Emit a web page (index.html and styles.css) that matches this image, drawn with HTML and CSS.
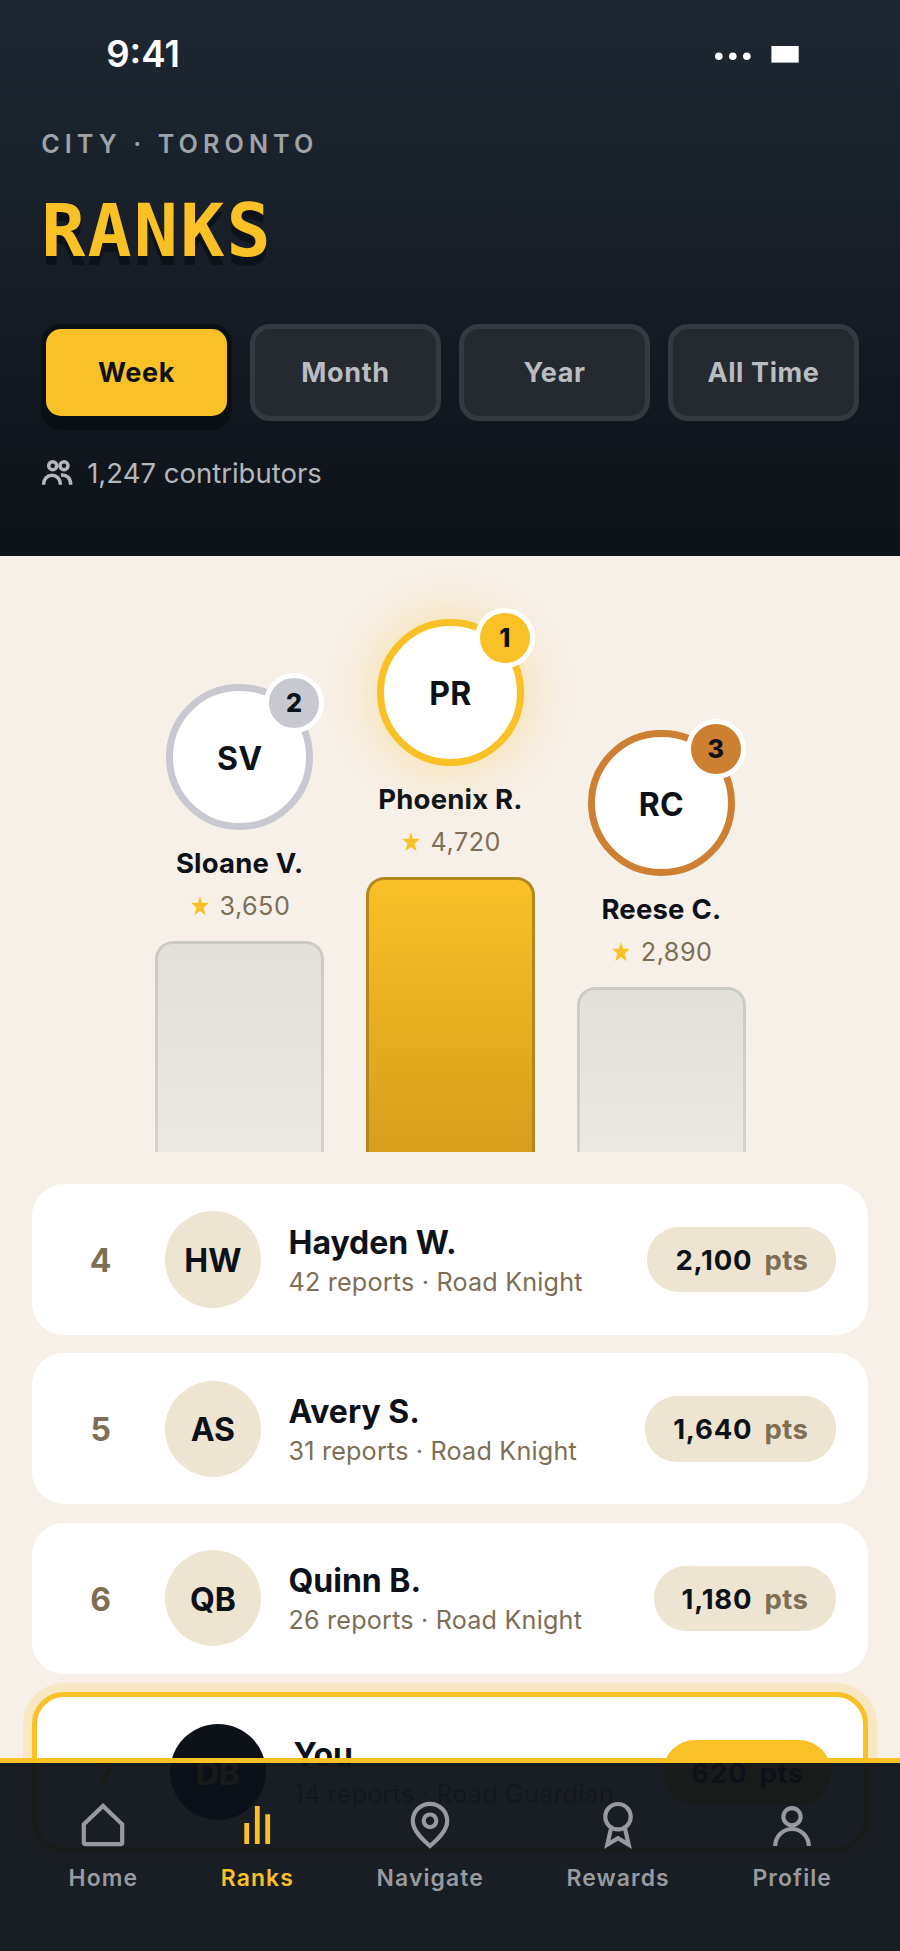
FILE: index.html
```html
<!DOCTYPE html>
<html lang="en">
<head>
<meta charset="utf-8">
<title>Ranks</title>
<link rel="stylesheet" href="styles.css">
</head>
<body>
<div class="screen">
  <header class="header">
    <div class="status">
      <span class="time">9:41</span>
      <svg class="status-icons" width="84" height="20" viewBox="0 0 84 20">
        <circle cx="3.8" cy="12.3" r="3.8"/><circle cx="17.8" cy="12.3" r="3.8"/><circle cx="31.8" cy="12.3" r="3.8"/>
        <rect x="56.4" y="2" width="27.3" height="16.6"/>
      </svg>
    </div>
    <div class="eyebrow">CITY · TORONTO</div>
    <h1 class="title">RANKS</h1>
    <div class="tabs">
      <button class="tab active">Week</button>
      <button class="tab">Month</button>
      <button class="tab">Year</button>
      <button class="tab">All Time</button>
    </div>
    <div class="contributors">
      <svg class="people" width="32" height="32" viewBox="0 0 32 32">
        <circle cx="11.7" cy="8.7" r="4"/><circle cx="23" cy="8.7" r="4"/>
        <path d="M2.7 27.7V26.7a8.3 8.4 0 0 1 16.6 0V27.7"/>
        <path d="M20 18C26 17.5 29.7 21.5 29.7 27.7"/>
      </svg>
      <span>1,247 contributors</span>
    </div>
  </header>

  <section class="podium">
    <div class="place silver">
      <div class="medal">SV<span class="badge">2</span></div>
      <div class="place-name">Sloane V.</div>
      <div class="place-points"><svg class="star" width="18" height="20" viewBox="0 0 18 20"><path d="M9 0l2 6.7h7l-5.4 4.8 2.1 7.8L9 15l-5.7 4.3 2.1-7.8L0 6.7h7z"/></svg>3,650</div>
      <div class="bar"></div>
    </div>
    <div class="place gold">
      <div class="medal">PR<span class="badge">1</span></div>
      <div class="place-name">Phoenix R.</div>
      <div class="place-points"><svg class="star" width="18" height="20" viewBox="0 0 18 20"><path d="M9 0l2 6.7h7l-5.4 4.8 2.1 7.8L9 15l-5.7 4.3 2.1-7.8L0 6.7h7z"/></svg>4,720</div>
      <div class="bar"></div>
    </div>
    <div class="place bronze">
      <div class="medal">RC<span class="badge">3</span></div>
      <div class="place-name">Reese C.</div>
      <div class="place-points"><svg class="star" width="18" height="20" viewBox="0 0 18 20"><path d="M9 0l2 6.7h7l-5.4 4.8 2.1 7.8L9 15l-5.7 4.3 2.1-7.8L0 6.7h7z"/></svg>2,890</div>
      <div class="bar"></div>
    </div>
  </section>

  <section class="list">
    <div class="row">
      <div class="rank">4</div><div class="avatar">HW</div>
      <div class="who"><div class="name">Hayden W.</div><div class="sub">42 reports · Road Knight</div></div>
      <div class="pill">2,100<span class="unit">pts</span></div>
    </div>
    <div class="row">
      <div class="rank">5</div><div class="avatar">AS</div>
      <div class="who"><div class="name">Avery S.</div><div class="sub">31 reports · Road Knight</div></div>
      <div class="pill">1,640<span class="unit">pts</span></div>
    </div>
    <div class="row">
      <div class="rank">6</div><div class="avatar">QB</div>
      <div class="who"><div class="name">Quinn B.</div><div class="sub">26 reports · Road Knight</div></div>
      <div class="pill">1,180<span class="unit">pts</span></div>
    </div>
    <div class="row me">
      <div class="rank">7</div><div class="avatar">DB</div>
      <div class="who"><div class="name">You</div><div class="sub">14 reports · Road Guardian</div></div>
      <div class="pill">620<span class="unit">pts</span></div>
    </div>
  </section>

  <nav class="nav">
    <a class="item">
      <svg class="icon" width="48" height="48" viewBox="0 0 48 48"><path d="M4.8 24.3L24 6l19.2 18.3v18.2q0 1.7-1.7 1.7h-35q-1.7 0-1.7-1.7z"/></svg>
      <span>Home</span>
    </a>
    <a class="item current">
      <svg class="icon bars" width="48" height="48" viewBox="0 0 48 48"><path d="M13.7 44V23M24.3 44V6M34.7 44V14.3"/></svg>
      <span>Ranks</span>
    </a>
    <a class="item">
      <svg class="icon" width="48" height="48" viewBox="0 0 48 48"><path d="M24 46C17 40 6.8 31 6.8 21a17.2 17.2 0 0 1 34.4 0C41.2 31 31 40 24 46z"/><circle cx="24" cy="20.8" r="6.3"/></svg>
      <span>Navigate</span>
    </a>
    <a class="item">
      <svg class="icon" width="48" height="48" viewBox="0 0 48 48"><circle cx="24" cy="16.7" r="12.7"/><path d="M17 28.5L13.3 44.6 24 38.3l10.7 6.3L31 28.5"/></svg>
      <span>Rewards</span>
    </a>
    <a class="item">
      <svg class="icon" width="48" height="48" viewBox="0 0 48 48"><circle cx="24" cy="16.7" r="8.6"/><path d="M7.2 46a16.8 17 0 0 1 33.6 0"/></svg>
      <span>Profile</span>
    </a>
  </nav>
</div>
</body>
</html>
```

FILE: styles.css
```css
* { box-sizing: border-box; }
body { margin: 0; font-family: Inter, "Liberation Sans", sans-serif; color: #0d1218; }

.screen { position: relative; width: 900px; height: 1951px; overflow: hidden; background: #f7f0e9; }

.header { height: 556px; padding: 32px 41.2px 0; background: linear-gradient(180deg, #1e2832, #0e1219); }
.status { display: flex; justify-content: space-between; height: 97px; padding: 0 60px 0 65px; color: #fff; }
.time { font-size: 36.6px; font-weight: 600; line-height: 45px; }
.status-icons { margin-top: 12px; fill: #fff; }
.eyebrow { font-size: 25.2px; font-weight: 600; line-height: 30px; letter-spacing: 5.05px; color: #9fa3a8; }
.title { margin: 34.5px 0 56.5px; font-family: "DejaVu Sans Mono", monospace; font-size: 73.3px; font-weight: 700; line-height: 74px; letter-spacing: 2.2px; color: #f9c126; text-shadow: 0 9px 0 #0d1218; }

.tabs { display: grid; grid-template-columns: repeat(4, 1fr); gap: 18.3px; }
.tab { height: 97.4px; padding: 0; border: 5px solid #343a40; border-radius: 20px; background: #252a31; font: 700 27px/34px Inter, sans-serif; letter-spacing: 0.6px; color: #b9bdc1; }
.tab.active { border-color: #0b1015; background: #f9c126; color: #0d1218; box-shadow: 0 9px 0 #0b1015; }

.contributors { display: flex; align-items: center; gap: 14px; margin-top: 34.5px; font-size: 27.5px; line-height: 34px; color: #b5b8bb; }
.people { fill: none; stroke: currentColor; stroke-width: 3.5; }

.podium { display: flex; justify-content: center; align-items: flex-end; gap: 41.4px; height: 596px; padding-left: 1px; }
.place { display: flex; flex-direction: column; align-items: center; width: 169.5px; }
.medal { position: relative; display: flex; align-items: center; justify-content: center; width: 146.6px; height: 146.6px; padding-top: 2px; border: 7px solid; border-radius: 50%; background: #fff; font-size: 32px; font-weight: 700; letter-spacing: 0.3px; }
.badge { position: absolute; top: -18.2px; right: -18.2px; display: flex; align-items: center; justify-content: center; width: 60px; height: 60px; border: 5px solid #fff; border-radius: 50%; font-size: 25.2px; font-weight: 800; }
.place-name { margin-top: 16px; font-size: 27.5px; font-weight: 700; line-height: 34px; letter-spacing: 0.2px; white-space: nowrap; }
.place-points { display: flex; align-items: center; gap: 10.5px; margin: 10.5px 0 20.5px 2px; font-size: 25.2px; line-height: 30px; letter-spacing: 0.5px; color: #7d6e55; }
.star { fill: #f9c126; }
.bar { width: 169.5px; border: 3px solid rgba(13, 18, 24, .1); border-bottom: 0; border-radius: 18.3px 18.3px 0 0; background: linear-gradient(180deg, #e2e0d9, #ebe9e2) border-box; }
.silver .medal { border-color: #c8c8d0; }
.silver .badge { background: #c8c8d0; }
.silver .bar { height: 210.7px; }
.gold .medal { border-color: #f9c126; box-shadow: 0 0 55px rgba(249, 193, 38, .4); }
.gold .badge { background: #f9c126; }
.gold .bar { height: 275px; border-color: #b1891f; background: linear-gradient(180deg, #f9c126, #d69e1c) border-box; }
.bronze .medal { border-color: #cd7f32; }
.bronze .badge { background: #cd7f32; }
.bronze .bar { height: 164.7px; }

.list { display: flex; flex-direction: column; gap: 18.4px; padding: 32px 32px 0; }
.row { display: flex; align-items: center; flex: none; height: 151px; padding: 0 32px; border-radius: 32px; background: #fff; }
.rank { width: 73.3px; padding-top: 2px; font-size: 32px; font-weight: 700; text-align: center; color: #7d6e55; }
.avatar { display: flex; align-items: center; justify-content: center; width: 96.2px; height: 96.2px; margin: 0 27.5px; padding-top: 2px; border-radius: 50%; background: #ede5d1; font-size: 32px; font-weight: 700; }
.who { flex: 1; }
.name { font-size: 32px; font-weight: 700; line-height: 39px; }
.sub { margin: 5px 0 -1px; font-size: 25.2px; line-height: 31px; letter-spacing: 0.18px; color: #7d6e55; }
.pill { height: 65.5px; padding: 0 27.5px 0 28px; border-radius: 32px; background: #ede5d1; font-size: 27.5px; font-weight: 700; line-height: 66px; letter-spacing: 0.8px; }
.unit { margin-left: 12px; letter-spacing: 0.5px; color: #7d6e55; }
.me { height: 160.2px; border: 5px solid #f9c126; box-shadow: 0 0 0 9.2px rgba(249, 193, 38, .2); }
.me .rank { color: #f9c126; }
.me .avatar { background: #0d1218; color: #f9c126; }
.me .pill { background: #f9c126; }
.me .unit { color: inherit; }

.nav { position: absolute; left: 0; right: 0; bottom: 0; display: flex; justify-content: space-between; height: 193px; padding: 36.6px 68px 0 68.6px; border-top: 5px solid #f9c126; background: rgba(13, 18, 25, .95); }
.item { display: flex; flex-direction: column; align-items: center; gap: 16.2px; font-size: 22.9px; font-weight: 600; line-height: 28px; letter-spacing: 1.1px; color: #979a9e; }
.current { color: #f9c126; }
.icon { fill: none; stroke: currentColor; stroke-width: 4.2; overflow: visible; }
.bars { stroke-width: 4.8; }
```
